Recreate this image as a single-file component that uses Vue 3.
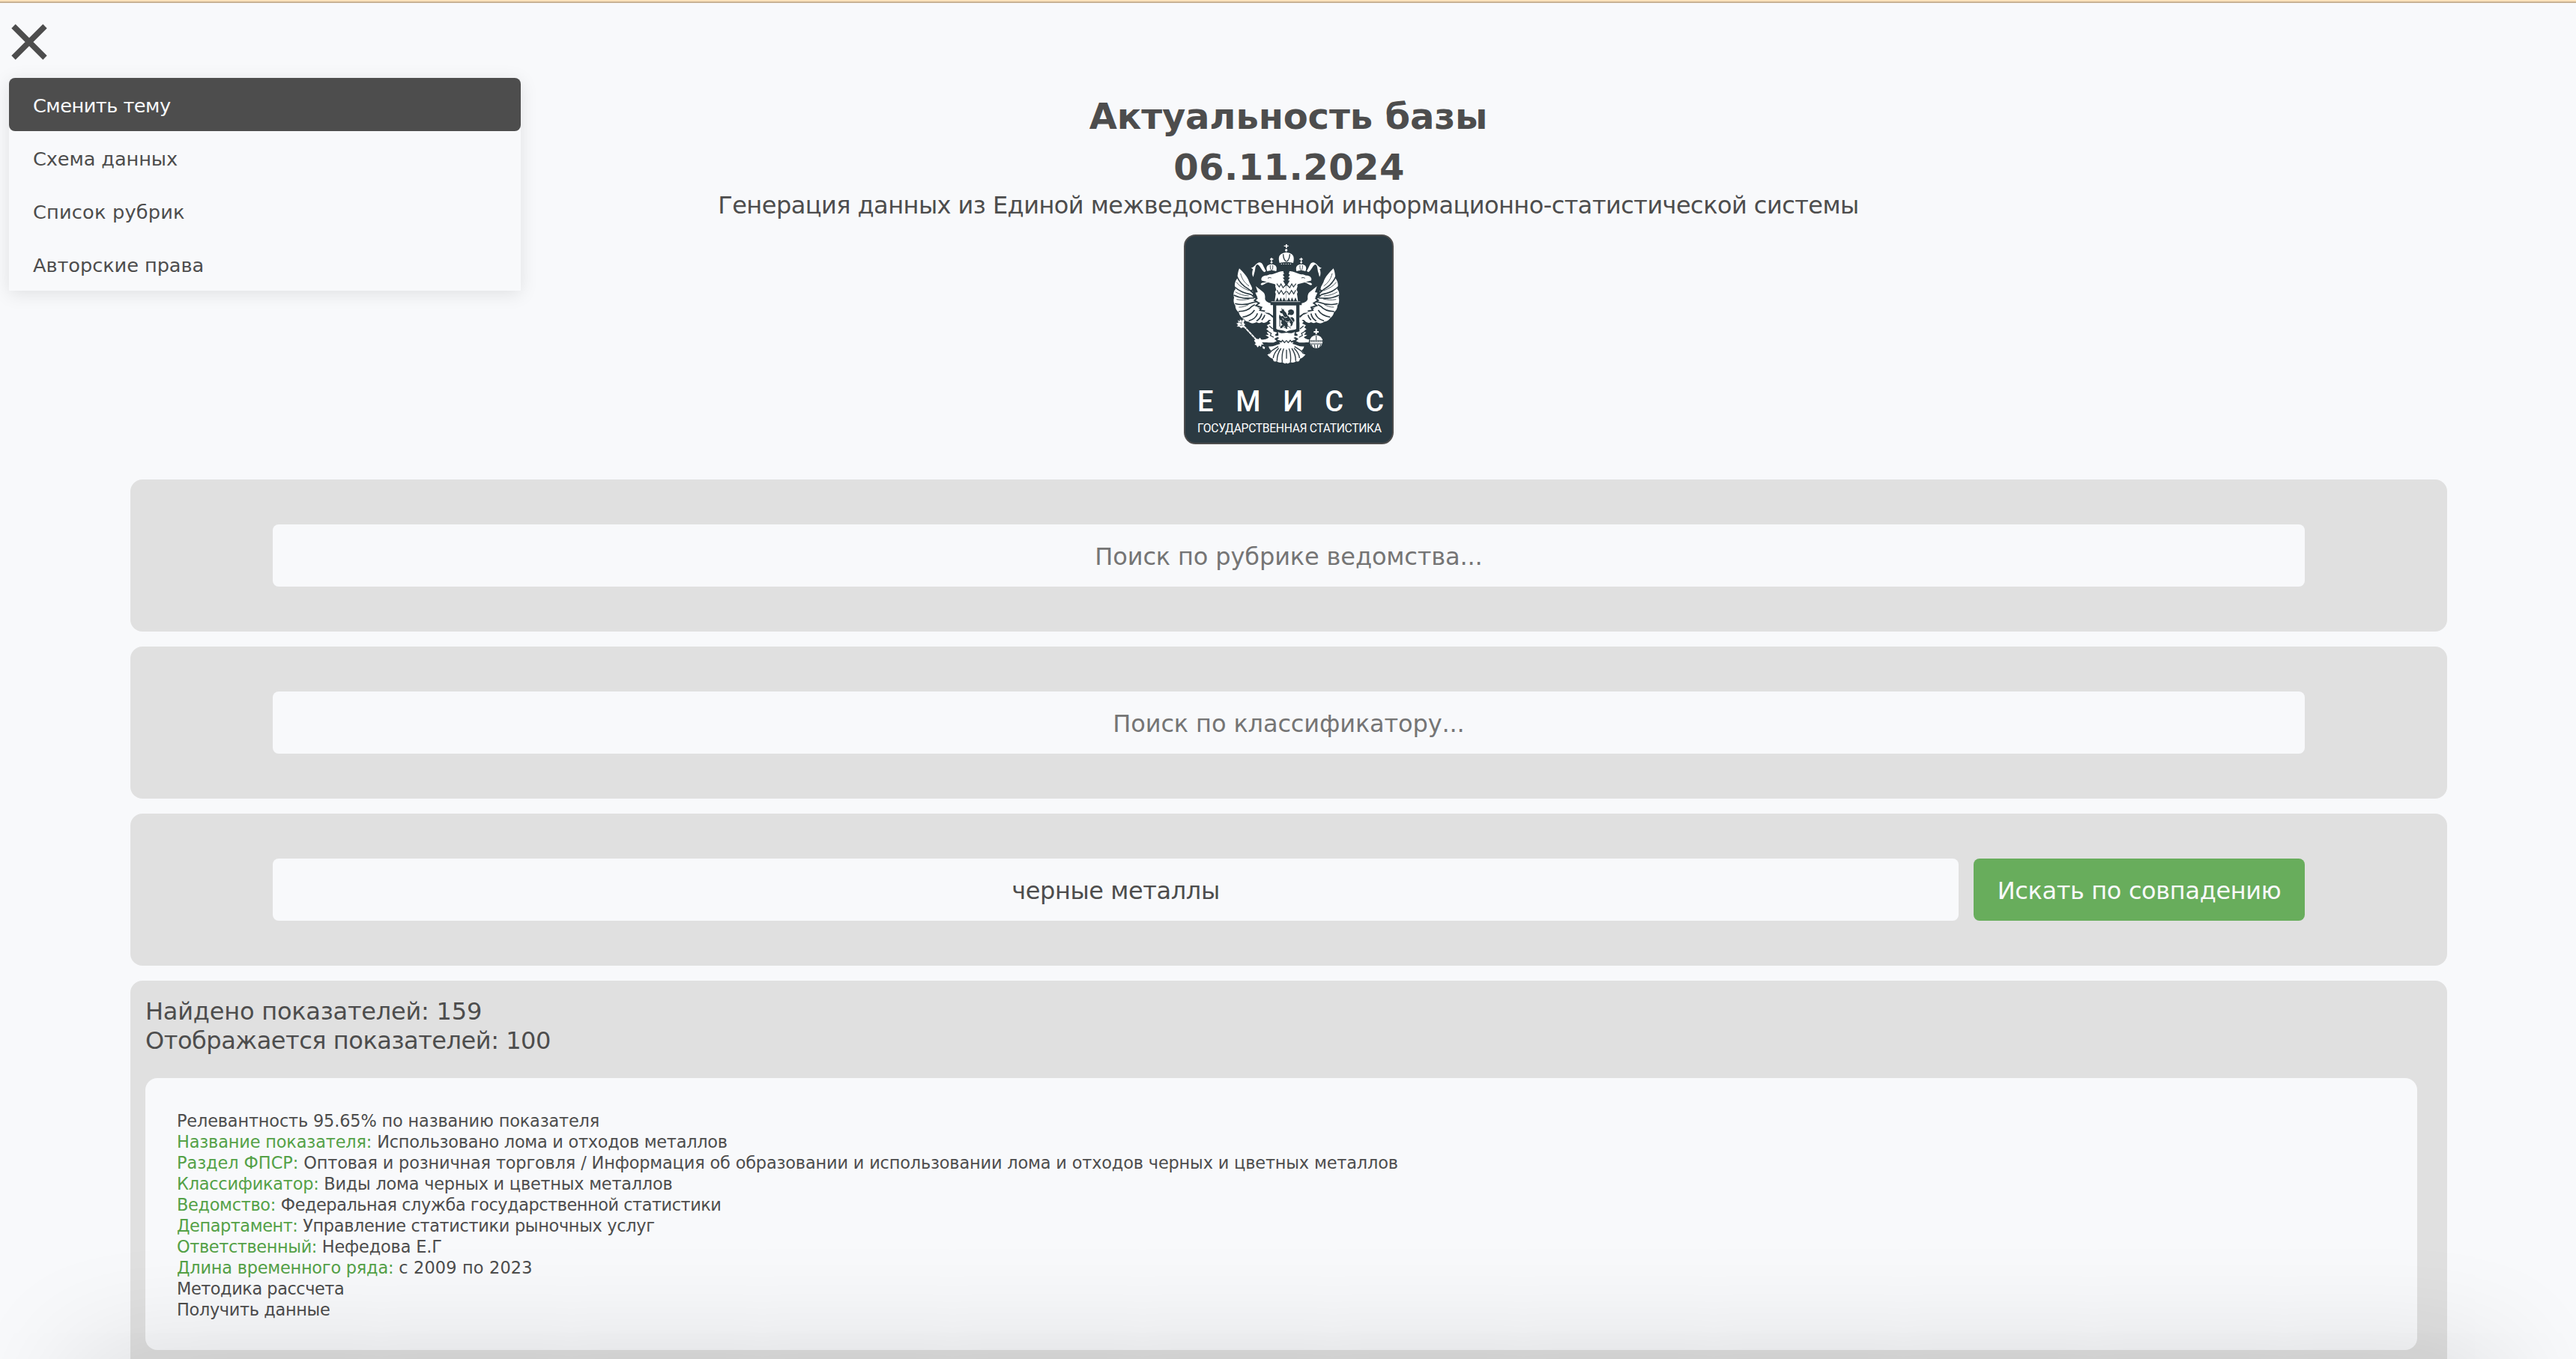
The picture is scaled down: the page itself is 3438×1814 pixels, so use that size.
<script setup>
import { ref } from 'vue'

const menu = [
  { text: 'Сменить тему', ls: -0.5 },
  { text: 'Схема данных', ls: -0.09 },
  { text: 'Список рубрик', ls: 0.2 },
  { text: 'Авторские права', ls: -0.05 },
]
const rubric = ref('')
const classifier = ref('')
const query = ref('черные металлы')

const rows = [
  { value: 'Релевантность 95.65% по названию показателя', ls: -0.14 },
  { label: 'Название показателя:', value: 'Использовано лома и отходов металлов', lls: -0.13, ls: -0.25 },
  { label: 'Раздел ФПСР:', value: 'Оптовая и розничная торговля / Информация об образовании и использовании лома и отходов черных и цветных металлов', lls: -0.03, ls: -0.14 },
  { label: 'Классификатор:', value: 'Виды лома черных и цветных металлов', lls: -0.22, ls: -0.21 },
  { label: 'Ведомство:', value: 'Федеральная служба государственной статистики', lls: -0.3, ls: -0.44 },
  { label: 'Департамент:', value: 'Управление статистики рыночных услуг', lls: -0.42, ls: -0.3 },
  { label: 'Ответственный:', value: 'Нефедова Е.Г', lls: -0.36, ls: -0.15 },
  { label: 'Длина временного ряда:', value: 'с 2009 по 2023', lls: -0.2, ls: 0.18 },
  { value: 'Методика рассчета', ls: -0.43 },
  { value: 'Получить данные', ls: -0.32 },
]
const track = (v) => ({ letterSpacing: (v || 0) + 'px' })
</script>

<template>
  <div class="page">
    <nav class="menu">
      <svg class="close" viewBox="0 0 48 48"><path d="M3 3 45 45M45 3 3 45" /></svg>
      <ul class="menu-list">
        <li v-for="(m, i) in menu" :key="m.text" :class="{ active: i === 0 }" :style="track(m.ls)">{{ m.text }}</li>
      </ul>
    </nav>

    <header class="head">
      <h1 class="title">Актуальность базы</h1>
      <h1 class="title date">06.11.2024</h1>
      <p class="subtitle">Генерация данных из Единой межведомственной информационно-статистической системы</p>
      <svg class="logo" viewBox="30 39 840 840">
        <rect x="33" y="42" width="834" height="834" rx="44" fill="#2b3a42" stroke="#4d4d4d" stroke-width="6" />
        <g fill="#fff">
          <!-- central crown -->
          <path d="M438 78h5v5h6v4h-6v6h-5v-6h-7v-4h7z" />
          <circle cx="440" cy="102" r="5" />
          <path d="M413 153c-4-16-4-28 6-35 7-6 15-6 21-8 7 2 15 2 22 8 9 7 10 19 6 35-15-4-39-4-55 0z" />
          <path d="M419 157h44" stroke="#fff" stroke-width="3" stroke-dasharray="4 5" />
          <path d="M428 118c0 16 4 24 12 30M454 118c0 16-5 24-12 30" fill="none" stroke="#2b3a42" stroke-width="4" />
          <g id="half">
            <!-- side crown -->
            <path d="M379 132h4v4h5v4h-5v6h-4v-6h-4v-4h4z" />
            <circle cx="381" cy="151" r="4" />
            <path d="M364 186c-6-16-3-26 17-28 20 2 23 12 19 28-12-4-25-4-36 0z" />
            <path d="M376 162c-1 9 1 16 4 21M386 162c1 9-1 16-3 21" stroke="#2b3a42" stroke-width="2.5" fill="none" />
            <!-- ribbon -->
            <path d="M299 173c12 0 20-20 33-22 16 0 16 20 27 34l-6 5c-14-8-18-29-29-31-10 4-7 24-12 34l-4 16c-7-10-4-24-1-31z" />
            <!-- head and neck -->
            <path d="M340 219c0-11 10-16 22-16l12-4c20 0 34-14 54-13l3 11-5 3 7 10-7 2 8 11-7 1 13 22v54l-2 6-7-15-7 15-6-15-7 15-7-15-6 14h-4l4-28-3-8 5-9-4-13c2-6 0-10-5-10l-23-6c-13 1-20 14-29 10-3-4 2-9 12-9l12-3c-10-3-19-5-21-5z" />
            <path d="M366 214c6-3 9-3 14-1" fill="none" stroke="#2b3a42" stroke-width="3" />
            <path d="M402 236l10 13 7-12 8 15 12-12M403 262l8 15 9-14 9 16 10-13" stroke="#2b3a42" stroke-width="3.5" fill="none" />
            <!-- inner wing -->
            <path d="M318 246l30 24c7 7 8 16 7 27 3 12 14 17 33 18v50l-17-12-25-2-18-6 10-11-22-4 8-10-18-9 14-5-9-12 14-2-9-20 10-2z" />
            <path d="M306 333l16 4-4 13 24 2 30 8 16 14v18c-10-14-25-18-34-12l-10-5-22 6-10-16-18-8z" />
            <!-- outer wing -->
            <g transform="translate(0 10.5) scale(1 0.94)">
              <path d="M252 175c16 16 34 36 40 59l14 28 1 22 20 35-4 20 24 20 30 18 4 18c-8-4-12-1-16 5-7 7-16 9-23 4-7 4-14 5-21 0-11 7-22 6-31-2-11-2-20-6-25-16-8-5-13-14-15-24-9-7-14-17-14-29-7-10-8-22-5-34-3-14-3-27 6-36-5-13-5-30 7-46 1-15 3-29 8-42z" />
              <path d="M242 208c12 30 27 43 46 54l17 14M232 253c21 20 38 26 71 34M230 289c28 15 52 14 82 12M235 325c30 8 50 4 72-5l16-4M249 358c27 0 43-8 53-21l12-8M265 382c26-4 39-14 48-30M290 398c22-7 30-16 35-32M321 399c12-8 18-17 21-32M342 395c6-7 10-12 12-22" stroke="#2b3a42" stroke-width="5" fill="none" />
              <path d="M257 196c6 25 15 39 34 54M240 233c12 18 32 28 52 37M236 275c20 12 34 15 54 17M241 307c20 4 34 2 52-2M250 340c16 0 28-4 40-12" stroke="#2b3a42" stroke-width="2.5" fill="none" />
              <path d="M303 240l4 25-8 6 14 14-8 6 17 12-9 8 18 12-12 10 22 8-6 12 20 4" stroke="#2b3a42" stroke-width="6" fill="none" />
            </g>
            <!-- tail -->
            <path d="M407 428c9 8 22 7 34 3v120c-3 8-12 4-16-1-8 3-16 3-23-4-8 4-14 2-16-10-6 0-14-6-22-16l6-2c2-7 6-11 10-14-6-5-10-10-10-17 16 3 28-6 46-10l-4-7 9-4-18-6 9-7-15-6 12-4z" />
            <path d="M408 464l11 6 6-7 8 9 8-9M372 517c6-14 22-20 36-29M388 534c1-14 10-28 22-40M403 545c0-20 6-36 16-50M424 550c-2-20 0-40 6-54" stroke="#2b3a42" stroke-width="4" fill="none" />
            <!-- leg -->
            <path d="M388 366v61l16 5-10 10 12 7-14 8 10 9-13 6c-22 0-36-2-50 0l-10-12c20 2 32-1 42-9l-14-9 13-2-8-9 8-5-10-8 9-7-7-8 15-8-6-7 13-9z" />
            <path d="M366 427l14 8-4 8 14 8M372 405l14 12" stroke="#2b3a42" stroke-width="3.5" fill="none" />
          </g>
          <use href="#half" transform="matrix(-1 0 0 1 881 0)" />
          <path d="M441 500v36" stroke="#2b3a42" stroke-width="4" />
          <!-- sceptre -->
          <path d="M254 377l9 7 6-8 5 8-4 9 7 6-6 6 5 8-10-1-7 3-7-6-11-1 5-7-7-7 9-2-3-10 9 3z" stroke="#2b3a42" stroke-width="2" />
          <path d="M250 390l10 4M262 386l-2 14M266 402l-12 2" stroke="#2b3a42" stroke-width="2" />
          <path d="M270 406l48 52" stroke="#fff" stroke-width="6" stroke-dasharray="14 1.5" />
          <path d="M311 464l8-8 10 2 6-6 5 8 8 4-5 8 7 8-9-1-2 10-7-5-7 7-5-9-7-2 5-6zM345 486l10 4-2 8-7-3z" />
          <!-- orb -->
          <path d="M557 416h6v10h7v6h-7v10h-6v-10h-7v-6h7z" />
          <circle cx="560" cy="468" r="28" stroke="#2b3a42" stroke-width="4" />
          <path d="M533 466h54" stroke="#2b3a42" stroke-width="6" />
          <path d="M535 466h50" stroke="#fff" stroke-width="3" stroke-dasharray="4 3" />
          <path d="M535 477h50M541 480l4 12M553 480l2 14M566 480l-1 14M578 480l-4 11M560 444v18" stroke="#2b3a42" stroke-width="3" />
          <!-- shield -->
          <path d="M377 308h125v14h-10v98l-20 8-33 5-31-5-21-8v-98h-10z" fill="#2b3a42" />
          <path d="M380 308h116" stroke="#fff" stroke-width="2" />
          <path d="M400 323h80v93c-4 8-27 2-40 13-13-11-36-5-40-13z" />
        </g>
        <!-- rider -->
        <path d="M421 332l5 8 5-4 1 9 8 6 4 9 5-8-2-7 7-5 8-1 8 5 1 9-4 7-8 2-6-3-5 6 8 6 8-1 7 6 2 9-6 7-3 11-7 6 1-12-6-8-8 5 3 8-5 7 3 8-7-1-3-9-6-3-5 9-9 2 3-10 7-4-6-8 3-9-8-4-3-11 2-6 9 4 7-3-5-9-7-1-3-8 8-2z" fill="#2b3a42" />
        <path d="M414 360v48M424 404l10 8 14-6 10 8" fill="none" stroke="#2b3a42" stroke-width="3" />
        <path d="M424 330l44 60M426 362l8 10 10-2M436 384l8 6 12-4M442 356l6 10M424 374l6 8" fill="none" stroke="#fff" stroke-width="2.5" />
        <g class="logo-text">
          <text y="748" font-size="114" x="84 238 427 595 757" font-weight="500">ЕМИСС</text>
          <text x="84" y="832" font-size="47" textLength="738">ГОСУДАРСТВЕННАЯ СТАТИСТИКА</text>
        </g>
      </svg>
    </header>

    <main class="content">
      <section class="panel">
        <input v-model="rubric" class="field" placeholder="Поиск по рубрике ведомства..." />
      </section>
      <section class="panel">
        <input v-model="classifier" class="field" placeholder="Поиск по классификатору..." />
      </section>
      <section class="panel">
        <input v-model="query" class="field query" />
        <button class="search">Искать по совпадению</button>
      </section>
      <section class="results">
        <p class="stat s1">Найдено показателей: 159</p>
        <p class="stat s2">Отображается показателей: 100</p>
        <article class="card">
          <p v-for="r in rows" :key="r.value">
            <span v-if="r.label" class="label" :style="track(r.lls)">{{ r.label + ' ' }}</span><span :style="track(r.ls)">{{ r.value }}</span>
          </p>
        </article>
      </section>
    </main>
    <div class="dock-shadow"></div>
  </div>
</template>

<style>
html, body { background: #f8f9fb; }
</style>

<style scoped>
.page {
  position: relative;
  box-sizing: border-box;
  height: 1814px;
  overflow: hidden;
  border-top: 2px solid #fde1ba;
  background: #f8f9fb;
  color: #4d4d4d;
  font-family: "DejaVu Sans", sans-serif;
}
.page::before { content: ""; display: block; height: 2px; background: #c8b294; }
h1, p, ul { margin: 0; padding: 0; }
.menu { position: absolute; left: 12px; top: 30px; width: 683px; }
.close { display: block; width: 48px; height: 48px; margin-left: 2.6px; }
.close path { stroke: #4d4d4d; stroke-width: 7.6; fill: none; }
.menu-list {
  list-style: none;
  margin-top: 24px;
  background: #f8f9fb;
  border-radius: 8px 8px 0 0;
  box-shadow: 0 4px 24px rgba(0, 0, 0, 0.1);
}
.menu-list li {
  box-sizing: border-box;
  height: 71px;
  padding: 3px 32px 0;
  line-height: 68px;
  font-size: 25.6px;
}
.menu-list .active { background: #4d4d4d; color: #f8f9fb; border-radius: 8px; }
.head { display: flex; flex-direction: column; align-items: center; padding-top: 118px; }
.title { font-size: 48px; line-height: 67px; font-weight: bold; letter-spacing: -0.1px; padding-left: 1px; }
.date { height: 66px; line-height: 68px; letter-spacing: 0.5px; padding-left: 3px; }
.subtitle { font-size: 32px; line-height: 39px; letter-spacing: -0.55px; padding-left: 1px; }
.logo { display: block; width: 280px; height: 280px; margin: 19px 0 47px 2px; }
.logo-text { font-family: Roboto, sans-serif; fill: #fff; }
.content { margin: 0 172px 0 174px; display: flex; flex-direction: column; gap: 20px; }
.panel {
  box-sizing: border-box;
  height: 203px;
  padding: 60px 190px;
  display: flex;
  gap: 20px;
  background: #e0e0e0;
  border-radius: 16px;
}
.field {
  box-sizing: border-box;
  flex: 1;
  min-width: 0;
  height: 83px;
  padding: 2px 32px 0;
  border: 0;
  outline: 0;
  border-radius: 8px;
  background: #f8f9fb;
  color: #4d4d4d;
  font: 32px "DejaVu Sans", sans-serif;
  letter-spacing: -0.13px;
  text-align: center;
}
.query { letter-spacing: -0.4px; }
.field::placeholder { color: #757575; opacity: 1; }
.search {
  box-sizing: border-box;
  width: 442px;
  height: 83px;
  padding: 2px 0 0;
  border: 0;
  border-radius: 8px;
  background: #68ad5c;
  color: #f8f9fb;
  font: 32px "DejaVu Sans", sans-serif;
  letter-spacing: -0.36px;
  white-space: nowrap;
}
.results { height: 600px; padding: 22px 40px 0 20px; background: #e0e0e0; border-radius: 16px; }
.stat { font-size: 32px; line-height: 39px; }
.s1 { letter-spacing: -0.22px; }
.s2 { letter-spacing: -0.46px; }
.card {
  box-sizing: border-box;
  height: 363px;
  margin-top: 30px;
  padding: 43px 42px 0;
  background: #f8f9fb;
  border-radius: 16px;
  font-size: 22.4px;
  line-height: 28px;
  white-space: nowrap;
}
.card .label { color: #54a147; white-space: pre; }
.dock-shadow {
  position: absolute;
  left: 100px;
  right: 100px;
  top: 1814px;
  height: 300px;
  border-radius: 20px;
  box-shadow: 0 0 160px rgba(0, 0, 0, 0.16);
}
</style>
